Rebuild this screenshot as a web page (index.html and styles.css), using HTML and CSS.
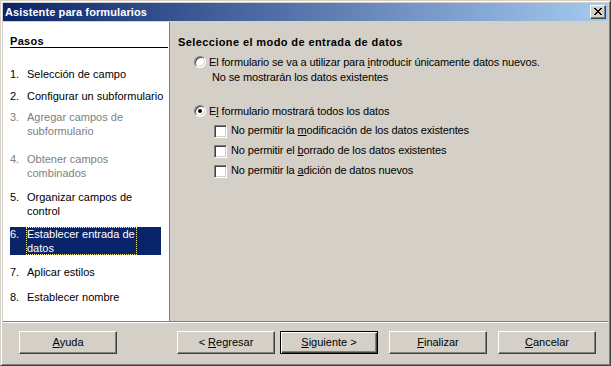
FILE: index.html
```html
<!DOCTYPE html>
<html lang="es">
<head>
<meta charset="utf-8">
<title>Asistente para formularios</title>
<link rel="stylesheet" href="styles.css">
</head>
<body>
<div class="window">
  <div class="titlebar">
    <span class="title">Asistente para formularios</span>
    <span class="close"><svg width="8" height="7" viewBox="0 0 8 7"><path d="M0 0h2v1h-2zM6 0h2v1h-2zM1 1h2v1h-2zM5 1h2v1h-2zM2 2h4v1h-4zM3 3h2v1h-2zM2 4h4v1h-4zM1 5h2v1h-2zM5 5h2v1h-2zM0 6h2v1h-2zM6 6h2v1h-2z" fill="#000"/></svg></span>
  </div>
  <div class="client">
    <div class="main">
      <div class="steps">
        <div class="steps-head">Pasos</div>
        <ol class="step-list">
          <li class="step s1"><span class="num">1.</span><span class="label">Selección de campo</span></li>
          <li class="step s2"><span class="num">2.</span><span class="label">Configurar un subformulario</span></li>
          <li class="step s3 disabled"><span class="num">3.</span><span class="label">Agregar campos de<br>subformulario</span></li>
          <li class="step s4 disabled"><span class="num">4.</span><span class="label">Obtener campos<br>combinados</span></li>
          <li class="step s5"><span class="num">5.</span><span class="label">Organizar campos de<br>control</span></li>
          <li class="step s6 active"><span class="num">6.</span><span class="label">Establecer entrada de<br>datos</span></li>
          <li class="step s7"><span class="num">7.</span><span class="label">Aplicar estilos</span></li>
          <li class="step s8"><span class="num">8.</span><span class="label">Establecer nombre</span></li>
        </ol>
      </div>
      <div class="content">
        <div class="heading">Seleccione el modo de entrada de datos</div>
        <div class="option opt-new">
          <span class="radio"></span>
          <span class="opt-text two-line">El formulario se va a utilizar para <u>i</u>ntroducir únicamente datos nuevos.<br>&nbsp;No se mostrarán los datos existentes</span>
        </div>
        <div class="option opt-all">
          <span class="radio checked"></span>
          <span class="opt-text">E<u>l</u> formulario mostrará todos los datos</span>
        </div>
        <div class="checks">
          <div class="check-row"><span class="checkbox"></span><span class="opt-text">No permitir la <u>m</u>odificación de los datos existentes</span></div>
          <div class="check-row"><span class="checkbox"></span><span class="opt-text">No permitir el <u>b</u>orrado de los datos existentes</span></div>
          <div class="check-row"><span class="checkbox"></span><span class="opt-text">No permitir la <u>a</u>dición de datos nuevos</span></div>
        </div>
      </div>
    </div>
    <div class="separator"></div>
    <div class="button-row">
      <span class="btn btn-help"><span class="btn-text"><u>A</u>yuda</span></span>
      <span class="btn btn-back"><span class="btn-text">&lt; <u>R</u>egresar</span></span>
      <span class="btn btn-next default"><span class="btn-text"><u>S</u>iguiente &gt;</span></span>
      <span class="btn btn-finish"><span class="btn-text"><u>F</u>inalizar</span></span>
      <span class="btn btn-cancel"><span class="btn-text"><u>C</u>ancelar</span></span>
    </div>
  </div>
</div>
</body>
</html>
```

FILE: styles.css
```css
* { box-sizing: border-box; }
html, body { margin: 0; padding: 0; }
body {
  width: 611px;
  height: 366px;
  overflow: hidden;
  font-family: "Liberation Sans", Arial, sans-serif;
  font-size: 11px;
  color: #000;
  background: #d4d0c8;
}
u { text-decoration: underline; text-underline-offset: 1px; }

.window {
  width: 611px;
  height: 366px;
  background: #d4d0c8;
  border: 1px solid;
  border-color: #d4d0c8 #404040 #404040 #d4d0c8;
  box-shadow: inset 1px 1px #fff, inset -1px -1px #808080;
  padding: 2px;
  display: flex;
  flex-direction: column;
}

.titlebar {
  height: 18px;
  margin-bottom: 1px;
  background: linear-gradient(to right, #0a246a, #a6caf0);
  display: flex;
  align-items: center;
  justify-content: space-between;
  padding: 0 2px 0 2px;
}
.title {
  color: #fff;
  font-weight: bold;
  font-size: 11px;
  line-height: 18px;
  letter-spacing: 0.1px;
}
.close {
  width: 16px;
  height: 14px;
  background: #d4d0c8;
  border: 1px solid;
  border-color: #fff #404040 #404040 #fff;
  box-shadow: inset -1px -1px #808080;
  display: flex;
  align-items: center;
  justify-content: center;
  padding: 0 1px 1px 0;
}
.close svg { display: block; }

.client {
  flex: 1;
  display: flex;
  flex-direction: column;
}
.main {
  height: 299px;
  display: flex;
}
.steps {
  width: 167px;
  background: #fff;
  border-right: 1px solid #808080;
  padding-top: 13px;
}
.steps-head {
  margin: 0 1px 0 7px;
  font-weight: bold;
  line-height: 12px;
  letter-spacing: 0.3px;
  border-bottom: 1px solid #000;
}
.step-list {
  list-style: none;
  margin: 0;
  padding: 0;
}
.step {
  display: flex;
  margin-left: 7px;
  width: 151px;
  line-height: 14px;
  white-space: nowrap;
}
.step .num { width: 17px; flex: none; }
.step .label { display: inline-block; }
.step.disabled { color: #808080; }
.step.active { background: #0a246a; color: #fff; }
.step.active .label { outline: 1px dotted #f4f0a0; outline-offset: -1px; margin-left: -1px; padding-left: 1px; padding-right: 2px; }

.s1 { margin-top: 19px; }
.s2 { margin-top: 8px; }
.s3 { margin-top: 7px; }
.s4 { margin-top: 14px; }
.s5 { margin-top: 10px; }
.s6 { margin-top: 9px; }
.s7 { margin-top: 10px; }
.s8 { margin-top: 11px; }

.content {
  flex: 1;
  padding: 13px 0 0 8px;
}
.heading {
  font-weight: bold;
  line-height: 14px;
  letter-spacing: 0.4px;
}
.option {
  display: flex;
  align-items: flex-start;
  margin-left: 16px;
}
.opt-new { margin-top: 6px; }
.opt-all { margin-top: 19px; }
.opt-text { line-height: 14px; white-space: nowrap; letter-spacing: -0.13px; }
.two-line { line-height: 15px; }

.radio {
  flex: none;
  width: 12px;
  height: 12px;
  margin: 1px 3px 0 0;
  border-radius: 50%;
  background: #fff;
  border: 1px solid;
  border-color: #808080 #fff #fff #808080;
  box-shadow: inset 1px 1px #404040, inset -1px -1px #d4d0c8;
  position: relative;
}
.radio.checked::after {
  content: "";
  position: absolute;
  left: 3px;
  top: 3px;
  width: 4px;
  height: 4px;
  border-radius: 50%;
  background: #000;
}

.checks {
  margin-left: 36px;
  margin-top: 5px;
  display: flex;
  flex-direction: column;
  gap: 5px;
}
.check-row {
  display: flex;
  align-items: flex-start;
}
.checkbox {
  flex: none;
  width: 13px;
  height: 13px;
  margin: 2px 4px 0 0;
  background: #fff;
  border: 1px solid;
  border-color: #808080 #fff #fff #808080;
  box-shadow: inset 1px 1px #404040, inset -1px -1px #d4d0c8;
}

.separator {
  height: 2px;
  border-top: 1px solid #808080;
  border-bottom: 1px solid #fff;
}
.button-row {
  flex: 1;
  display: flex;
  align-items: flex-start;
  padding: 8px 12px 0 16px;
}
.btn {
  width: 98px;
  height: 23px;
  display: flex;
  align-items: center;
  justify-content: center;
  border: 1px solid;
  border-color: #fff #404040 #404040 #fff;
  box-shadow: inset -1px -1px #808080;
  background: #d4d0c8;
  line-height: 13px;
  padding-bottom: 1px;
}
.btn-text { white-space: nowrap; }
.btn.default {
  border-color: #000;
  box-shadow: inset 1px 1px #fff, inset -1px -1px #404040, inset -2px -2px #808080;
}
.btn-help { margin-right: auto; }
.btn-next { margin-left: 5px; }
.btn-finish { margin-left: 11px; }
.btn-cancel { margin-left: 11px; }
```
